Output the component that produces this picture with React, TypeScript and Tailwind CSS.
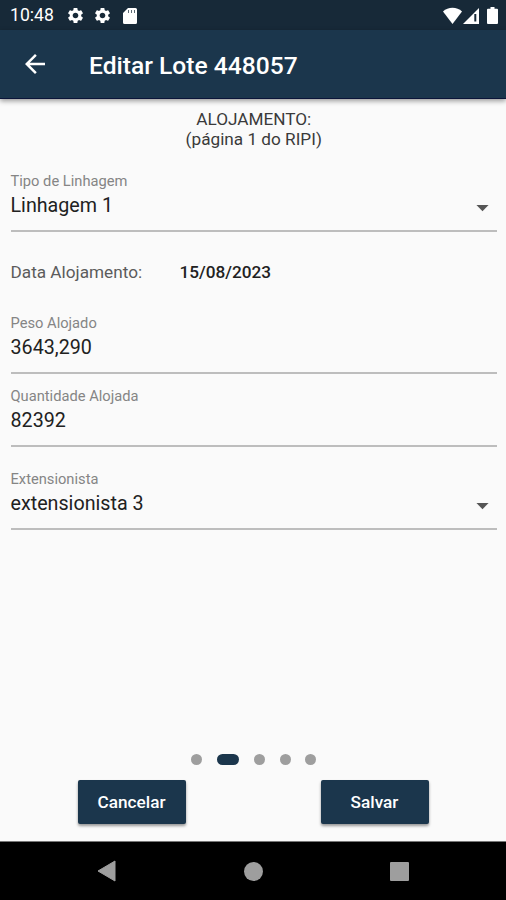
import { ReactNode } from "react";
import { MdArrowBack, MdArrowDropDown, MdSettings } from "react-icons/md";

const PAGES = 5;
const CURRENT_PAGE = 1;

export default function App() {
  return (
    <div className="flex h-[900px] w-[506px] flex-col overflow-hidden bg-[#fafafa] font-['Roboto',sans-serif] text-[#212121]">
      <StatusBar />

      <header className="z-10 flex h-[69px] shrink-0 items-center border-b border-[#0b1539] bg-[#1b364c] pl-5 text-white shadow-[0_2px_5px_rgba(0,0,0,0.4)]">
        <button type="button" aria-label="Voltar">
          <MdArrowBack className="size-[30px]" />
        </button>
        <h1 className="ml-[39px] pt-[3px] text-[24.6px] font-medium leading-8">
          Editar Lote 448057
        </h1>
      </header>

      <main className="flex flex-1 flex-col pl-[10.5px] pr-[9px] pt-[10px]">
        <div className="text-center text-[17.2px] leading-5 text-[#3a3a3a]">
          <p>ALOJAMENTO:</p>
          <p>(página 1 do RIPI)</p>
        </div>

        <div className="pt-[22px]">
          <Field label="Tipo de Linhagem" value="Linhagem 1" select />
        </div>

        <div className="flex h-[81px] items-center text-[17.2px]">
          <span className="w-[169px] text-[#5c5c5c]">Data Alojamento:</span>
          <span className="font-medium">15/08/2023</span>
        </div>

        <Field label="Peso Alojado" value="3643,290" />
        <div className="pt-3">
          <Field label="Quantidade Alojada" value="82392" />
        </div>
        <div className="pt-[22px]">
          <Field label="Extensionista" value="extensionista 3" select />
        </div>

        <div className="mt-auto flex items-center justify-center gap-[14.8px]">
          {Array.from({ length: PAGES }, (_, i) => (
            <span
              key={i}
              className={
                i === CURRENT_PAGE
                  ? "h-[11px] w-[22px] rounded-full bg-[#1b364c]"
                  : "size-[11px] rounded-full bg-[#9e9e9e]"
              }
            />
          ))}
        </div>

        <div className="mb-[17px] mt-[15px] flex gap-[135px] pl-[67px]">
          <Button>Cancelar</Button>
          <Button>Salvar</Button>
        </div>
      </main>

      <NavigationBar />
    </div>
  );
}

function StatusBar() {
  return (
    <div className="flex h-[30px] shrink-0 items-center bg-[#172938] pl-[10px] pr-2 pt-px text-white">
      <span className="w-[56px] text-[17.6px]">10:48</span>
      <MdSettings className="size-[19px]" />
      <MdSettings className="ml-2 size-[19px]" />
      {/* SD card */}
      <svg className="ml-[11px] h-4 w-[14px]" viewBox="0 0 14 16" fill="none">
        <path
          d="M5 0h7.5A1.5 1.5 0 0 1 14 1.5v13a1.5 1.5 0 0 1-1.5 1.5h-11A1.5 1.5 0 0 1 0 14.500V5z"
          fill="#fff"
        />
        <path d="M5.500 2v3M8.500 2v3M11.500 2v3" stroke="#172938" strokeOpacity="0.7" />
      </svg>

      {/* Wi-Fi, signal, battery */}
      <svg className="ml-auto h-[17px] w-[19px]" viewBox="0 0 19 17">
        <path d="M9.500 17 0 4.500C5-.5 14-.5 19 4.500z" fill="#fff" />
      </svg>
      <svg className="ml-px h-4 w-4" viewBox="0 0 16 16">
        <path d="M0 16 16 0v16z" fill="#fff" />
        <path d="M12.300 6v7.500" stroke="#172938" strokeWidth="2" />
      </svg>
      <svg className="ml-2 h-[17px] w-[11px]" viewBox="0 0 11 17">
        <path
          d="M3.500 0h4v1.800H10a1 1 0 0 1 1 1V16a1 1 0 0 1-1 1H1a1 1 0 0 1-1-1V2.800a1 1 0 0 1 1-1h2.500z"
          fill="#fff"
        />
      </svg>
    </div>
  );
}

function Field({
  label,
  value,
  select = false,
}: {
  label: string;
  value: string;
  select?: boolean;
}) {
  return (
    <div className="h-[61px] border-b-2 border-[#bdbdbd] pt-px">
      <div className="text-[14.7px] leading-[18px] text-[#858585]">{label}</div>
      <div className="flex h-8 items-center justify-between text-[19.7px]">
        <span>{value}</span>
        {select && (
          <MdArrowDropDown className="mt-0.5 size-[29px] text-[#555]" />
        )}
      </div>
    </div>
  );
}

function Button({ children }: { children: ReactNode }) {
  return (
    <button
      type="button"
      className="h-11 w-[108px] rounded-[2px] bg-[#1b364c] pt-0.5 text-[17.2px] font-medium text-white shadow-[0_2px_3px_rgba(0,0,0,0.4)]"
    >
      {children}
    </button>
  );
}

function NavigationBar() {
  return (
    <nav className="flex h-[59px] shrink-0 items-center justify-between border-t border-[#777] bg-black pl-[97px] pr-[97px] text-[#9e9e9e]">
      <svg className="h-[22px] w-[19px]" viewBox="0 0 19 22">
        <path d="M1 11 18 1v20z" fill="currentColor" stroke="currentColor" strokeLinejoin="round" />
      </svg>
      <span className="size-[19px] rounded-full bg-[#9e9e9e]" />
      <span className="size-[19px] rounded-[1px] bg-[#9e9e9e]" />
    </nav>
  );
}
